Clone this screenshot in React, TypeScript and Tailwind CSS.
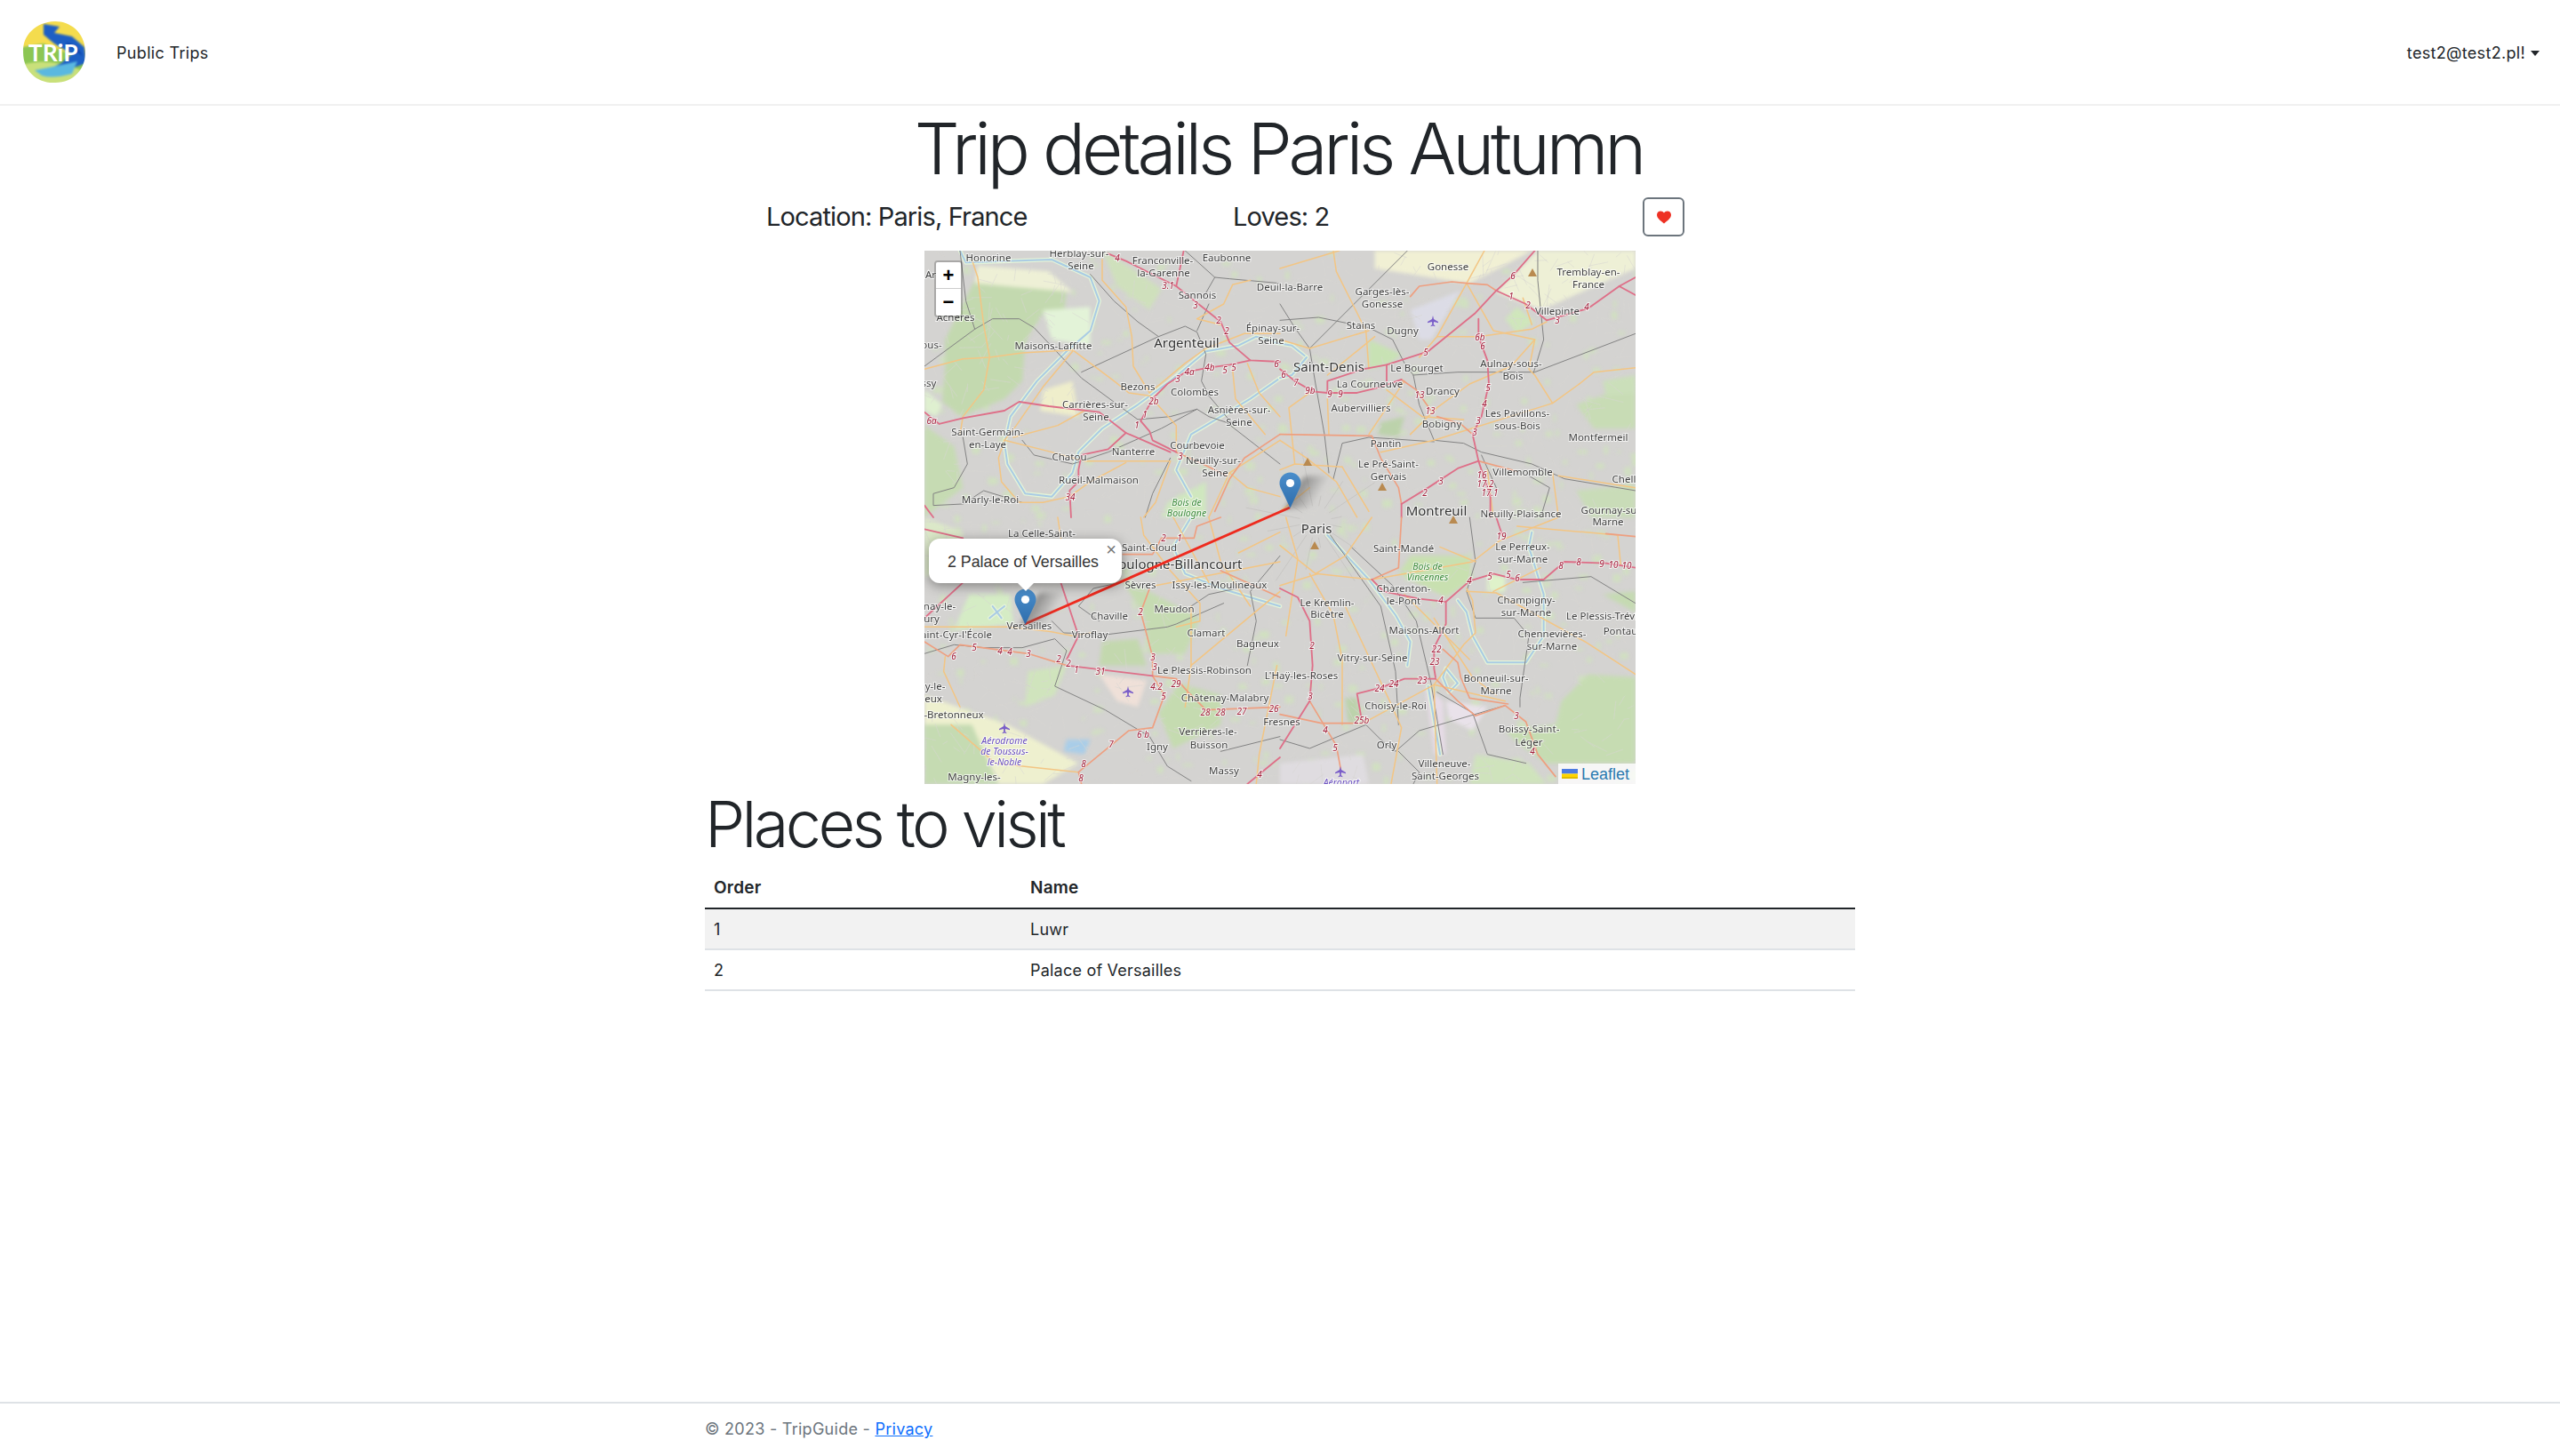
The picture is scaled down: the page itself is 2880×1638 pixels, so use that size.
import { Fragment } from "react";

type Label = [string, number, number];

// place names, centre x / baseline-ish y in map pixels
const places: Label[] = [
  ["Honorine", 72, 8], ["Herblay-sur-", 174, 3], ["Seine", 176, 17], ["Franconville-", 268, 11], ["la-Garenne", 269, 25],
  ["Eaubonne", 340, 8], ["Deuil-la-Barre", 411, 41], ["Sannois", 307, 50], ["Achères", 35, 75], ["Maisons-Laffitte", 145, 107],
  ["Épinay-sur-", 392, 87], ["Seine", 390, 101], ["Bezons", 240, 153], ["Colombes", 304, 159], ["Asnières-sur-", 354, 179],
  ["Seine", 354, 193], ["Carrières-sur-", 192, 173], ["Seine", 193, 187], ["Saint-Germain-", 71, 204], ["en-Laye", 71, 218],
  ["Chatou", 163, 232], ["Nanterre", 235, 226], ["Courbevoie", 307, 219], ["Neuilly-sur-", 325, 236], ["Seine", 327, 250],
  ["Rueil-Malmaison", 196, 258], ["Marly-le-Roi", 74, 280], ["ous-", 8, 106], ["ssy", 5, 149], ["Ar", 7, 27],
  ["Gonesse", 589, 18], ["Garges-lès-", 515, 46], ["Gonesse", 515, 60], ["Tremblay-en-", 747, 24], ["France", 747, 38],
  ["Villepinte", 712, 68], ["Stains", 491, 84], ["Dugny", 538, 90], ["Le Bourget", 554, 132], ["Aulnay-sous-", 660, 127],
  ["Bois", 662, 141], ["La Courneuve", 501, 150], ["Drancy", 583, 158], ["Aubervilliers", 491, 177], ["Les Pavillons-", 667, 183],
  ["sous-Bois", 667, 197], ["Bobigny", 582, 195], ["Pantin", 519, 217], ["Montfermeil", 758, 210], ["Le Pré-Saint-", 522, 240],
  ["Gervais", 522, 254], ["Villemomble", 673, 249], ["Chell", 787, 257], ["Neuilly-Plaisance", 671, 296], ["Gournay-su", 770, 292],
  ["La Celle-Saint-", 132, 318], ["Saint-Cloud", 253, 334], ["Sèvres", 243, 376], ["Issy-les-Moulineaux", 332, 376], ["Meudon", 281, 403],
  ["Chaville", 208, 411], ["Versailles", 118, 422], ["Viroflay", 186, 432], ["Clamart", 317, 430], ["Bagneux", 375, 442],
  ["nay-le-", 17, 400], ["ury", 8, 414], ["aint-Cyr-l'École", 36, 432], ["y-le-", 12, 490], ["eux", 10, 504],
  ["-Bretonneux", 33, 522], ["Le Plessis-Robinson", 315, 472], ["Châtenay-Malabry", 338, 503], ["Verrières-le-", 319, 541], ["Buisson", 320, 556],
  ["Igny", 262, 558], ["Massy", 337, 585], ["Magny-les-", 56, 592], ["Saint-Mandé", 539, 335], ["Charenton-", 539, 380],
  ["le-Pont", 539, 394], ["Le Kremlin-", 453, 396], ["Bicêtre", 453, 409], ["Champigny-", 677, 393], ["sur-Marne", 677, 407],
  ["Le Plessis-Trévi", 762, 411], ["Pontau", 783, 428], ["Maisons-Alfort", 562, 427], ["Chennevières-", 706, 431], ["sur-Marne", 706, 445],
  ["Le Perreux-", 673, 333], ["sur-Marne", 673, 347], ["Marne", 769, 305], ["Vitry-sur-Seine", 504, 458], ["L'Haÿ-les-Roses", 424, 478],
  ["Bonneuil-sur-", 643, 481], ["Marne", 643, 495], ["Choisy-le-Roi", 530, 512], ["Fresnes", 402, 530], ["Boissy-Saint-", 680, 538],
  ["Léger", 680, 553], ["Orly", 520, 556], ["Villeneuve-", 585, 577], ["Saint-Georges", 586, 591],
];

const bigPlaces: Label[] = [
  ["Argenteuil", 295, 103], ["Saint-Denis", 455, 130], ["Montreuil", 576, 292], ["Paris", 441, 312], ["Boulogne-Billancourt", 283, 352],
];

const roadNumbers: Label[] = [
  ["4", 217, 8], ["3.1", 274, 39], ["3", 305, 61], ["2", 331, 78], ["2", 340, 90], ["6", 396, 127], ["5", 348, 131], ["5", 338, 134],
  ["4b", 321, 131], ["4a", 298, 136], ["3", 285, 144], ["2b", 258, 169], ["1", 248, 184], ["1", 239, 196], ["3", 288, 231], ["6a", 8, 191],
  ["34", 164, 277], ["6", 662, 28], ["1", 660, 51], ["2", 679, 61], ["3", 712, 78], ["4", 745, 63], ["6b", 625, 97], ["6", 628, 107],
  ["5", 564, 114], ["6", 404, 139], ["7", 418, 148], ["9b", 434, 157], ["9", 456, 161], ["9", 468, 161], ["13", 557, 162], ["13", 569, 180],
  ["5", 634, 154], ["4", 630, 172], ["3", 623, 191], ["3", 619, 204], ["16", 627, 252], ["17.2", 631, 262], ["17.1", 636, 272], ["3", 581, 259],
  ["2", 563, 272], ["2", 269, 323], ["1", 287, 323], ["2", 243, 406], ["5", 56, 446], ["4", 85, 450], ["4", 96, 451], ["3", 117, 453],
  ["6", 33, 456], ["2", 151, 459], ["2", 162, 464], ["1", 171, 471], ["31", 198, 473], ["3", 257, 457], ["3", 259, 468], ["4.2", 261, 490],
  ["29", 283, 487], ["5", 269, 501], ["28", 316, 519], ["28", 333, 519], ["27", 357, 518], ["26", 393, 515], ["6 b", 246, 544], ["7", 210, 555],
  ["8", 179, 577], ["8", 176, 593], ["4", 377, 589], ["19", 649, 321], ["8", 716, 354], ["8", 736, 350], ["9", 762, 352], ["10", 775, 353],
  ["10", 790, 354], ["5", 636, 366], ["5", 657, 364], ["6", 667, 368], ["4", 613, 371], ["4", 581, 393], ["2", 436, 444], ["22", 576, 448],
  ["23", 574, 462], ["23", 560, 483], ["24", 528, 487], ["24", 512, 492], ["3", 434, 501], ["25b", 492, 528], ["4", 451, 539], ["5", 462, 559],
  ["3", 666, 523], ["4", 684, 563],
];

const parkNames: Label[] = [["Bois de", 295, 283], ["Boulogne", 295, 295], ["Bois de", 566, 355], ["Vincennes", 566, 367]];
const airportNames: Label[] = [["Aérodrome", 90, 551], ["de Toussus-", 90, 563], ["le-Noble", 90, 575], ["Aéroport", 469, 598]];
const peaks = [[684, 25], [431, 238], [515, 266], [595, 303], [439, 332]];
const planes = [[572, 79], [229, 496], [90, 537], [468, 586]];

type Quadrant = {
  x: number;
  y: number;
  areas: [string, string][];
  water: string[];
  rail: string[];
  orange: string[];
  salmon: string[];
  pink: string[];
};

// traced in 3x crop coordinates, one block per quadrant of the map
const quadrants: Quadrant[] = [
  {
    x: 0,
    y: 0,
    areas: [
      ["M170,100 L480,130 L470,220 L400,210 L340,310 L330,440 L270,500 L125,560 L60,510 L70,400 L70,300Z", "#c3d9af"],
      ["M180,50 L420,70 L500,140 L170,110Z", "#eef0d6"],
      ["M400,200 L560,190 L560,320 L430,300Z", "#e3f3d8"],
      ["M400,470 L500,440 L520,560 L390,540Z", "#efeecb"],
      ["M820,850 L950,780 L950,900 L800,900Z", "#cfe7bf"],
      ["M0,590 L100,660 L130,800 L0,900Z", "#c6dbb3"],
      ["M600,0 L700,60 L800,130 L760,200 L650,120Z", "#cfe0bc"],
      ["M0,470 L60,520 L40,560 L0,540Z", "#dff0d0"],
    ],
    water: [
      "M120,0 L140,40 L430,30 L560,90 L590,170 L560,270 L480,340 L380,440 L290,560 L270,650 L280,720 L340,820 L430,830 L500,750 L520,680 L600,600 L720,520 L830,440 L950,340 L1060,320 L1120,290 L1200,310",
      "M1200,430 L1100,500 L900,620 L850,740 L900,830",
    ],
    rail: [
      "M0,390 L170,265 L230,230 L320,230 L370,260 L530,430 L720,570 L830,560 L920,535 L960,560 L1020,580 L1200,720",
      "M530,410 L790,290 L880,255 L920,275 L950,350 L935,440 L960,490 L1040,585",
      "M120,0 L140,170 L170,265",
      "M560,80 L640,170 L720,240 L790,290",
      "M880,0 L980,90 L1030,95 L1200,110",
      "M980,90 L940,160",
      "M920,270 L960,180",
      "M330,640 L370,690 L500,720 L620,680 L800,600 L920,535",
      "M130,630 L145,720 L100,800 L30,820 L30,860 L130,855 L200,810 L330,850",
      "M830,700 L770,820 L745,900",
    ],
    orange: [
      "M160,30 L180,90 L200,250 L220,360 L200,470 L130,560 L120,620",
      "M0,400 L130,365 L220,360 L330,345 L500,335 L640,440 L690,480 L760,490 L850,590 L850,680",
      "M500,340 L400,460 L310,590 L270,640",
      "M270,640 L430,680 L540,710 L680,710 L830,710",
      "M600,30 L600,100 L680,190 L700,290 L705,390 L760,480",
      "M760,480 L880,380 L950,330 L1080,280 L1200,280",
      "M270,640 L250,700 L260,780 L320,850 L400,850 L490,830",
      "M680,715 L560,780 L490,830",
      "M1000,250 L920,230 L1010,180 L1040,115 L1100,100",
      "M830,710 L780,850 L740,900",
      "M1090,380 L1130,480 L1200,560",
      "M1040,400 L1050,500 L1150,620",
      "M300,630 L450,590 L540,540",
      "M1030,750 L1200,640",
      "M1030,750 L1090,800 L1200,830",
      "M1030,750 L960,900",
    ],
    salmon: ["M850,680 L940,720 L1020,760", "M1200,620 L1080,700 L1030,770 L980,880"],
    pink: [
      "M620,10 L680,35 L850,120 L1000,240 L1030,310 L1100,370 L1200,375",
      "M1100,370 L1030,385 L960,395 L880,410 L820,450 L770,500 L730,575",
      "M730,575 L760,610 L770,640 L850,680",
      "M0,545 L50,585 L130,565 L270,540 L320,510 L420,525 L590,545 L680,615 L830,680",
      "M680,615 L620,670 L530,690 L520,740 L520,780 L490,810 L495,900",
      "M850,120 L875,0",
      "M0,860 L30,900",
    ],
  },
  {
    x: 400,
    y: 0,
    areas: [
      ["M640,110 L850,0 L320,0 L320,60 L570,100Z", "#f1f0d4"],
      ["M730,140 L870,0 L1200,0 L1200,60 L880,200Z", "#eef0d6"],
      ["M300,300 L410,350 L370,380 L300,400Z", "#c8e2b4"],
      ["M1000,520 L1200,450 L1200,600 L1060,600Z", "#c8dcb5"],
      ["M440,200 L610,135 L510,300 L470,300Z", "#dcdce6"],
      ["M800,190 L860,240 L800,280 L760,230Z", "#cfe6bb"],
      ["M1090,440 L1200,420 L1200,480 L1100,490Z", "#cbdfba"],
      ["M340,580 L420,560 L400,630 L330,620Z", "#bcd2ab"],
      ["M1000,810 L1200,790 L1200,900 L1050,900Z", "#c9dcb8"],
    ],
    water: ["M-20,310 L40,320 L90,360", "M90,360 L40,420 L0,430"],
    rail: [
      "M430,0 L100,330 L120,450 L150,620 L165,750",
      "M100,330 L50,260 L0,180",
      "M0,235 L130,225 L300,260 L380,300 L420,380 L450,420 L470,520 L520,640 L620,650 L680,680 L850,720 L960,770 L1200,810",
      "M450,420 L600,410 L860,410 L1200,280",
      "M520,645 L300,630 L210,650 L180,770",
      "M855,415 L890,300 L870,100 L870,0",
      "M680,690 L730,800",
      "M840,760 L910,800 L880,900",
    ],
    orange: [
      "M530,290 L670,290 L850,265 L900,240",
      "M630,110 L720,270 L860,300 L840,400 L860,420 L920,515 L1010,450",
      "M860,300 L780,390 L640,450 L530,530 L440,620",
      "M360,470 L480,560 L620,570",
      "M690,0 L630,110 L530,290 L470,360",
      "M180,0 L190,70 L290,270 L300,400",
      "M300,270 L100,330 L0,300",
      "M420,440 L300,620",
      "M340,680 L520,640 L920,515",
      "M210,730 L50,720 L0,740",
      "M50,720 L30,530 L100,480",
      "M160,500 L165,620",
      "M920,750 L940,900",
      "M700,740 L720,900",
      "M940,760 L1200,800",
      "M1010,450 L1060,410 L1200,395",
      "M210,730 L300,880",
      "M0,640 L90,700 L190,780 L260,900",
      "M100,800 L0,880",
      "M320,290 L160,420",
      "M820,160 L850,250",
      "M200,0 L0,60",
    ],
    salmon: [
      "M440,155 L470,120 L580,105 L630,110 L700,115 L730,135",
      "M0,620 L310,625 L340,700 L400,800 L410,855",
      "M670,710 L800,745",
      "M530,560 L610,585 L650,620",
      "M410,435 L460,470 L510,540",
    ],
    pink: [
      "M860,0 L790,80 L730,135 L660,210 L500,340 L360,385 L280,400 L160,440 L160,480 L110,475 L50,440 L0,400",
      "M160,480 L260,480 L340,460 L410,435",
      "M670,230 L670,290 L700,370 L705,450 L680,560 L650,620 L670,710 L710,830 L710,900",
      "M730,135 L830,180 L900,235 L1040,195 L1145,120 L1200,150",
      "M670,710 L600,735 L500,800 L410,855",
      "M410,855 L410,900",
      "M360,385 L360,440",
      "M1145,120 L1200,90",
    ],
  },
  {
    x: 0,
    y: 300,
    areas: [
      ["M0,600 L280,700 L520,830 L400,900 L0,900Z", "#eef0cf"],
      ["M0,700 L160,700 L250,900 L0,900Z", "#c5dbb2"],
      ["M600,420 L720,410 L750,500 L590,500Z", "#c3d8ae"],
      ["M860,560 L1000,600 L1000,700 L840,780 L790,660Z", "#c5dbb0"],
      ["M660,200 L930,340 L880,460 L760,460 L740,330Z", "#c6dbb2"],
      ["M150,260 L290,260 L300,360 L100,380Z", "#d5ecc5"],
      ["M590,530 L750,550 L720,640 L650,620Z", "#efe0d8"],
      ["M350,520 L480,500 L440,600 L340,640Z", "#d0e4bd"],
      ["M480,750 L560,750 L540,800 L470,790Z", "#a9cde8"],
      ["M0,0 L130,50 L120,180 L0,200Z", "#dbe8c8"],
    ],
    water: ["M900,0 L840,100 L880,190 L1000,240 L1200,300", "M230,300 L260,340 M220,340 L270,300"],
    rail: [
      "M0,460 L100,430 L200,440 L330,440 L440,410 L480,450 L440,570 L610,650 L760,740 L820,840 L900,890",
      "M430,350 L470,390 L620,395 L820,370 L850,360 L1010,290",
      "M660,220 L570,240 L520,300 L590,350",
      "M1200,130 L1100,250 L1120,350 L1090,500",
      "M1000,790 L1200,740",
      "M900,300 L960,260 L1100,230",
    ],
    orange: [
      "M0,370 L280,370 L420,385 L500,400 L560,390",
      "M70,470 L65,520 L120,640",
      "M90,700 L240,830 L520,860",
      "M900,300 L900,500 L880,640",
      "M730,0 L740,60 L830,180 L930,290 L930,350 L850,370",
      "M1200,250 L900,500",
      "M1190,500 L1130,800 L1120,900",
      "M780,230 L1200,150",
      "M960,0 L1000,150 L1100,300",
      "M1060,120 L1200,50",
      "M450,0 L480,200",
      "M840,0 L960,220",
    ],
    salmon: [
      "M0,420 L80,470 L120,430 L350,460 L480,500",
      "M770,535 L850,545 L890,590 L950,650 L1200,640",
      "M770,535 L810,600 L770,710 L690,720 L520,860 L530,900",
      "M770,535 L770,470 L730,320 L760,240",
      "M670,125 L770,125 L800,70 L910,70 L920,30 L1000,0",
      "M1000,180 L1200,270",
    ],
    pink: ["M480,500 L770,535", "M0,40 L130,70", "M460,220 L520,400 L480,480", "M130,220 L0,340", "M1200,810 L1090,900"],
  },
  {
    x: 400,
    y: 300,
    areas: [
      ["M1200,540 L1040,530 L950,620 L930,700 L760,720 L800,760 L900,830 L1200,830Z", "#c6dcb2"],
      ["M440,130 L640,130 L650,210 L560,270 L400,190Z", "#c8e0b0"],
      ["M1200,250 L1090,260 L1200,320Z", "#c5dab2"],
      ["M0,830 L280,800 L300,900 L0,900Z", "#dfdce0"],
      ["M490,570 L550,620 L560,800 L520,800Z", "#e6dbe6"],
      ["M560,620 L700,640 L650,720 L570,680Z", "#e9e2ea"],
      ["M220,610 L260,610 L280,700 L230,690Z", "#bcd2ab"],
      ["M700,190 L760,200 L760,250 L700,250Z", "#dff2ca"],
      ["M660,800 L840,830 L900,900 L640,900Z", "#cfe3bc"],
    ],
    water: [
      "M850,50 L840,100 L890,260 L890,400 L830,490 L700,490 L650,400 L630,320 L600,280",
      "M160,60 L300,210 L390,330 L440,420 L430,500",
      "M500,570 L540,800",
      "M560,510 L600,560 L570,590 L550,540Z",
    ],
    rail: [
      "M170,60 L340,300 L390,520 L400,700",
      "M240,100 L380,230 L460,350 L510,560 L550,800",
      "M0,750 L100,780 L290,700 L340,750 L390,790 L470,720 L760,635",
      "M630,250 L660,340 L790,340 L840,400 L810,610 L810,640",
      "M640,0 L660,150 L630,250",
      "M820,220 L1050,200 L1200,290",
      "M400,790 L470,860 L450,900",
      "M530,590 L650,660 L700,800 L830,830",
    ],
    orange: [
      "M0,95 L120,190 L220,130 L310,0",
      "M120,190 L310,210 L650,150 L740,80 L940,0",
      "M210,700 L210,480 L180,330 L100,190",
      "M220,300 L370,620 L410,710 L375,900",
      "M280,695 L520,565 L760,620",
      "M520,565 L620,430 L660,390 L650,280 L630,240",
      "M520,340 L650,540 L730,600",
      "M420,260 L640,480",
      "M630,250 L730,255 L1030,420 L1200,530",
      "M540,100 L660,150",
      "M720,250 L880,170",
      "M800,30 L1140,60 L1150,160",
      "M520,565 L530,900",
      "M0,230 L130,190",
      "M20,0 L60,140 L20,400",
    ],
    salmon: [
      "M0,665 L140,695 L280,695",
      "M100,620 L190,770 L205,850",
      "M550,445 L600,490 L610,540 L640,610 L770,630",
      "M525,545 L600,620 L660,670 L760,635 L830,690 L870,800 L930,875",
      "M310,210 L400,170 L410,0",
      "M1100,55 L1200,65",
    ],
    pink: [
      "M310,210 L350,250 L470,275 L560,285 L640,215 L720,190 L800,210 L890,210 L960,150 L1100,155 L1200,170",
      "M560,285 L560,360 L520,440 L520,510 L525,540",
      "M525,545 L420,545 L340,575 L260,595 L275,680",
      "M0,240 L60,270 L100,350 L110,500 L100,620 L0,780",
      "M730,0 L750,60",
    ],
  },
];

// little streets and garden specks so the built-up area doesn't look flat
function buildTexture() {
  let seed = 1337;
  const rnd = () => {
    seed = (seed * 16807) % 2147483647;
    return seed / 2147483647;
  };
  let streets = "";
  let specks = "";
  for (let i = 0; i < 1400; i++) {
    const x = rnd() * 800;
    const y = rnd() * 600;
    const a = rnd() * Math.PI * 2;
    const l = 6 + rnd() * 22;
    streets += `M${x.toFixed(1)},${y.toFixed(1)}L${(x + Math.cos(a) * l).toFixed(1)},${(y + Math.sin(a) * l).toFixed(1)}`;
  }
  for (let i = 0; i < 520; i++) {
    const x = rnd() * 800;
    const y = rnd() * 600;
    const w = 2 + rnd() * 9;
    const h = 2 + rnd() * 7;
    specks += `M${x.toFixed(1)},${y.toFixed(1)}h${w.toFixed(1)}v${h.toFixed(1)}h${(-w).toFixed(1)}z`;
  }
  // radial streets around central Paris
  let paris = "";
  for (let i = 0; i < 16; i++) {
    const a = (i / 16) * Math.PI * 2 + 0.2;
    const r = 30 + (i % 3) * 25;
    paris += `M${(440 + Math.cos(a) * 18).toFixed(1)},${(305 + Math.sin(a) * 18).toFixed(1)}L${(440 + Math.cos(a) * r).toFixed(1)},${(305 + Math.sin(a) * r).toFixed(1)}`;
  }
  return { streets, specks, paris };
}

const texture = buildTexture();

function MapTiles() {
  return (
    <svg viewBox="0 0 800 600" className="block h-full w-full bg-[#d4d3d1] blur-[0.35px]">
      <g className="blur-[2px]">
        <path d={texture.specks} fill="#cfe3bb" opacity="0.8" />
        {quadrants.map((q, i) => (
          <g key={i} transform={`translate(${q.x},${q.y}) scale(0.3333)`}>
            {q.areas.map(([d, fill], j) => (
              <path key={j} d={d} fill={fill} />
            ))}
          </g>
        ))}
      </g>
      <path d={texture.streets} stroke="#f2f1ef" strokeWidth="0.7" opacity="0.6" fill="none" />
      <path d={texture.streets} stroke="#9f9d9b" strokeWidth="0.3" opacity="0.6" fill="none" />
      <path d={texture.paris} stroke="#b3b1af" strokeWidth="0.4" fill="none" />
      <g fill="none" strokeLinecap="round" strokeLinejoin="round">
        {quadrants.map((q, i) => (
          <g key={i} transform={`translate(${q.x},${q.y}) scale(0.3333)`}>
            {q.water.map((d, j) => (
              <Fragment key={j}>
                <path d={d} stroke="#e4f3d8" strokeWidth="14" />
                <path d={d} stroke="#a9cbe4" strokeWidth="6" />
              </Fragment>
            ))}
            {q.rail.map((d, j) => (
              <path key={j} d={d} stroke="#828282" strokeWidth="3" />
            ))}
            {q.orange.map((d, j) => (
              <path key={j} d={d} stroke="#f3c583" strokeWidth="4.5" />
            ))}
            {q.salmon.map((d, j) => (
              <path key={j} d={d} stroke="#ee9f80" strokeWidth="5" />
            ))}
            {q.pink.map((d, j) => (
              <path key={j} d={d} stroke="#de6f88" strokeWidth="5.5" />
            ))}
          </g>
        ))}
      </g>
      {peaks.map(([x, y], i) => (
        <path key={i} d={`M${x},${y - 5}l5,9h-10z`} fill="#b98a50" />
      ))}
      {planes.map(([x, y], i) => (
        <path
          key={i}
          transform={`translate(${x},${y})`}
          d="M0,-6 L1,-2 L6,1 L6,2.2 L1,1 L0.8,4 L2.4,5.5 L2.4,6.2 L0,5.4 L-2.4,6.2 L-2.4,5.5 L-0.8,4 L-1,1 L-6,2.2 L-6,1 L-1,-2Z"
          fill="#7a5ec9"
        />
      ))}
      <g
        textAnchor="middle"
        fontFamily="'Noto Sans', sans-serif"
        stroke="#ffffff"
        strokeOpacity="0.7"
        strokeWidth="2"
        paintOrder="stroke"
      >
        {places.map(([t, x, y], i) => (
          <text key={i} x={x} y={y + 4} fontSize="11.5" fill="#3f3f3f">
            {t}
          </text>
        ))}
        {bigPlaces.map(([t, x, y], i) => (
          <text key={i} x={x} y={y + 6} fontSize="15" fill="#333333">
            {t}
          </text>
        ))}
        {parkNames.map(([t, x, y], i) => (
          <text key={i} x={x} y={y + 4} fontSize="10.5" fontStyle="italic" fill="#3c8a3c">
            {t}
          </text>
        ))}
        {airportNames.map(([t, x, y], i) => (
          <text key={i} x={x} y={y + 4} fontSize="10.5" fontStyle="italic" fill="#6a4fc0">
            {t}
          </text>
        ))}
        {roadNumbers.map(([t, x, y], i) => (
          <text key={i} x={x} y={y + 4} fontSize="10" fontStyle="italic" fill="#a3203c">
            {t}
          </text>
        ))}
      </g>
      <path d="M113,420 L411,289" stroke="#ee2a1e" strokeWidth="3" fill="none" />
    </svg>
  );
}

function Marker({ className }: { className: string }) {
  return (
    <svg viewBox="0 0 25 41" className={`absolute h-[41px] w-[25px] ${className}`}>
      <defs>
        <linearGradient id="pin" x1="0" y1="0" x2="0" y2="1">
          <stop offset="0" stopColor="#4a8ecb" />
          <stop offset="1" stopColor="#2e6dac" />
        </linearGradient>
      </defs>
      <path
        d="M12.5,0.5 C5.9,0.5 0.5,5.8 0.5,12.4 C0.5,15 1.4,17.3 2.6,19.7 L12.5,40.5 L22.4,19.7 C23.6,17.3 24.5,15 24.5,12.4 C24.5,5.8 19.1,0.5 12.5,0.5Z"
        fill="url(#pin)"
      />
      <circle cx="12.5" cy="12.5" r="4.6" fill="#ffffff" />
    </svg>
  );
}

function TripMap() {
  return (
    <div className="relative mx-auto h-[600px] w-[800px] overflow-hidden">
      <MapTiles />

      {/* marker shadows */}
      <div className="absolute left-[118px] top-[385px] h-[36px] w-[30px] -skew-x-[30deg] bg-gradient-to-r from-[#55555599] to-transparent blur-[3px]" />
      <div className="absolute left-[416px] top-[254px] h-[36px] w-[30px] -skew-x-[30deg] bg-gradient-to-r from-[#55555599] to-transparent blur-[3px]" />
      <Marker className="left-[101px] top-[380px]" />
      <Marker className="left-[399px] top-[249px]" />

      {/* zoom control */}
      <div className="absolute left-[11px] top-[11px] flex w-[32px] flex-col overflow-hidden rounded-[4px] border-2 border-[#00000033] bg-clip-padding">
        <div className="flex h-[30px] items-center justify-center border-b border-[#cccccc] bg-white font-[Liberation_Sans,sans-serif] text-[22px] font-bold leading-none text-black">
          +
        </div>
        <div className="flex h-[30px] items-center justify-center bg-white font-[Liberation_Sans,sans-serif] text-[22px] font-bold leading-none text-black">
          −
        </div>
      </div>

      {/* popup */}
      <div className="absolute left-[5px] top-[324px] h-[50px] w-[217px] rounded-[12px] bg-white shadow-[0_3px_14px_rgba(0,0,0,0.4)]">
        <p className="pl-[21px] pt-[16px] font-[Liberation_Sans,sans-serif] text-[17.8px] leading-[21px] text-[#333333]">
          2 Palace of Versailles
        </p>
        <span className="absolute right-[6px] top-[2px] font-[Liberation_Sans,sans-serif] text-[20px] leading-[20px] text-[#757575]">
          ×
        </span>
        <div className="absolute left-[99px] top-[49px] h-0 w-0 border-x-[10px] border-t-[10px] border-x-transparent border-t-white" />
      </div>

      {/* attribution */}
      <div className="absolute bottom-0 right-0 flex h-[23px] w-[87px] items-center gap-[4px] bg-[#ffffffcc] pl-[4px] font-[Liberation_Sans,sans-serif] text-[18px] leading-none text-[#2a7ab0]">
        <svg viewBox="0 0 18 11" className="h-[11px] w-[18px]">
          <rect width="18" height="5.5" fill="#4c7be1" />
          <rect y="5.5" width="18" height="3.5" fill="#ffd500" />
          <rect y="9" width="18" height="2" fill="#e0bc00" />
        </svg>
        Leaflet
      </div>
    </div>
  );
}

function Logo() {
  return (
    <svg viewBox="0 0 72 72" className="h-[72px] w-[72px]">
      <defs>
        <clipPath id="blob">
          <path d="M36,1 C52,0 70,12 71,34 C72,54 58,70 37,70 C16,71 1,56 1,36 C0,16 16,2 36,1Z" />
        </clipPath>
      </defs>
      <g clipPath="url(#blob)">
        <g className="blur-[1.2px]">
          <rect width="72" height="72" fill="#f4dc4e" />
          <path d="M0,30 L24,26 L72,45 L72,72 L0,72Z" fill="#8cc653" />
          <path d="M0,50 Q30,40 72,58 L72,72 L0,72Z" fill="#c9e07a" />
          <path d="M24,4 L42,7 L36,14 L56,18 L70,30 L72,48 L50,56 L20,60 L44,48 L56,38 L36,26 L24,16Z" fill="#1d5fc4" />
          <path d="M14,56 Q36,52 62,46 L56,60 Q34,66 22,62Z" fill="#5ab8e0" />
          <path d="M48,24 Q62,28 68,40 L60,34Z" fill="#0a3fa8" />
        </g>
        <text
          x="35"
          y="46"
          textAnchor="middle"
          fontFamily="Lato, sans-serif"
          fontSize="26"
          fontWeight="700"
          fill="#ffffff"
        >
          TRiP
        </text>
      </g>
    </svg>
  );
}

function Navbar() {
  return (
    <nav className="flex h-[119px] items-center border-b-2 border-[#f0f0f0] pl-[25px] pr-[23px] text-[18px] tracking-[0.018em] text-[#212529]">
      <Logo />
      <a className="ml-[34px] mt-[2px]">Public Trips</a>
      <div className="ml-auto mt-[2px] flex items-center gap-[6px]">
        <span>test2@test2.pl!</span>
        <span className="h-0 w-0 border-x-[5px] border-t-[6px] border-x-transparent border-t-[#212529]" />
      </div>
    </nav>
  );
}

export default function App() {
  return (
    <div className="flex min-h-[1638px] flex-col bg-white font-[Inter,sans-serif] text-[#212529]">
      <Navbar />
      <main className="mx-auto w-[1320px] px-[13px]">
        <h1 className="pr-[3px] text-center text-[80px] font-light leading-[96px] tracking-[-0.0525em]">Trip details Paris Autumn</h1>
        <div className="ml-[69px] mt-[7px] flex items-center text-[29px] tracking-[-0.03em]">
          <div className="w-[525px]">Location: Paris, France</div>
          <div className="w-[461px]">Loves: 2</div>
          <button
            type="button"
            className="flex h-[44px] w-[47px] items-center justify-center rounded-[6px] border-2 border-[#6c757d] bg-white"
          >
            <svg viewBox="0 0 16 14" className="h-[15px] w-[16px]">
              <path d="M8,14 C4,10.5 0,8 0,4.2 C0,1.6 2,0 4.2,0 C5.8,0 7.2,0.8 8,2 C8.8,0.8 10.2,0 11.8,0 C14,0 16,1.6 16,4.2 C16,8 12,10.5 8,14Z" fill="#ee3124" />
            </svg>
          </button>
        </div>
        <div className="mt-[16px]">
          <TripMap />
        </div>
        <h2 className="mt-[2px] text-[72px] font-light leading-[86px] tracking-[-0.05em]">Places to visit</h2>
        <table className="mt-[8px] w-full table-fixed border-collapse text-[18px] tracking-[0.012em]">
          <thead>
            <tr className="border-b-2 border-[#212529] text-left text-[19px]">
              <th className="h-[44px] w-[356px] px-[10px] font-semibold">Order</th>
              <th className="h-[44px] px-[10px] font-semibold">Name</th>
            </tr>
          </thead>
          <tbody>
            <tr className="border-b-2 border-[#dee2e6] bg-[#f2f2f2]">
              <td className="h-[46px] px-[10px]">1</td>
              <td className="h-[46px] px-[10px]">Luwr</td>
            </tr>
            <tr className="border-b-2 border-[#dee2e6]">
              <td className="h-[46px] px-[10px]">2</td>
              <td className="h-[46px] px-[10px]">Palace of Versailles</td>
            </tr>
          </tbody>
        </table>
      </main>
      <footer className="mt-auto h-[61px] border-t-2 border-[#dee2e6]">
        <div className="mx-auto w-[1320px] px-[13px] pt-[17px] text-[18px] leading-[24px] tracking-[0.015em] text-[#6c757d]">
          © 2023 - TripGuide - <a className="text-[#0d6efd] underline">Privacy</a>
        </div>
      </footer>
    </div>
  );
}
